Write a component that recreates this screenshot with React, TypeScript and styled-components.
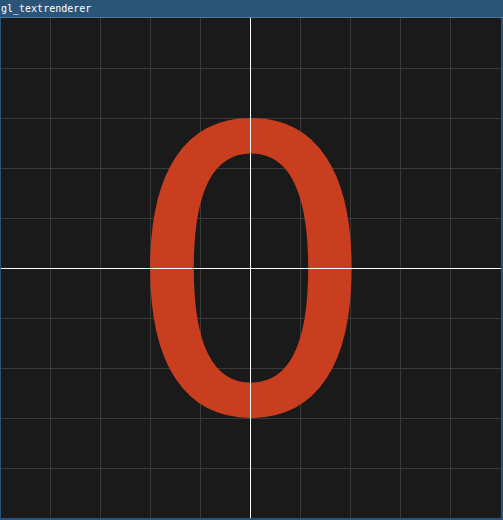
import React from "react";
import styled, { createGlobalStyle } from "styled-components";

const Global = createGlobalStyle`
  html, body { margin: 0; padding: 0; background: #2a5578; }
  #root { width: 503px; height: 520px; }
`;

const Window = styled.div`
  width: 503px;
  height: 520px;
  box-sizing: border-box;
  display: flex;
  flex-direction: column;
  background: #2a5578;
  padding: 0 2px 2px 1px;
  overflow: hidden;
`;

const TitleBar = styled.div`
  height: 17px;
  margin: 0 -2px 0 -1px;
  padding-left: 1px;
  border-bottom: 1px solid #4a7aa0;
  display: flex;
  align-items: center;
  color: #ffffff;
  font-family: "DejaVu Sans Mono", "Liberation Mono", monospace;
  font-size: 10px;
  line-height: 17px;
`;

const Canvas = styled.svg`
  display: block;
  width: 500px;
  height: 500px;
  background: #1a1a1a;
`;

const GridLine = styled.line`
  stroke: #3a3a3a;
  stroke-width: 1;
  shape-rendering: crispEdges;
`;

const AxisLine = styled.line`
  stroke: #ffffff;
  stroke-width: 1;
  shape-rendering: crispEdges;
`;

const Glyph = styled.text`
  fill: #c93e1f;
  stroke: #c93e1f;
  stroke-width: 5px;
  stroke-linejoin: round;
  font-family: "DejaVu Sans", sans-serif;
  font-size: 390px;
`;

export default function App() {
  const ticks = [49, 99, 149, 199, 299, 349, 399, 449];
  const hticks = [50, 100, 150, 200, 300, 350, 400, 450];
  return (
    <>
      <Global />
      <Window>
        <TitleBar>gl_textrenderer</TitleBar>
        <Canvas viewBox="0 0 500 500">
          {ticks.map((x) => (
            <GridLine key={"v" + x} x1={x + 0.5} y1={0} x2={x + 0.5} y2={500} />
          ))}
          {hticks.map((y) => (
            <GridLine key={"h" + y} x1={0} y1={y + 0.5} x2={500} y2={y + 0.5} />
          ))}
          <Glyph x={250} y={392} textAnchor="middle">0</Glyph>
          <AxisLine x1={249.5} y1={0} x2={249.5} y2={500} />
          <AxisLine x1={0} y1={250.5} x2={500} y2={250.5} />
        </Canvas>
      </Window>
    </>
  );
}
